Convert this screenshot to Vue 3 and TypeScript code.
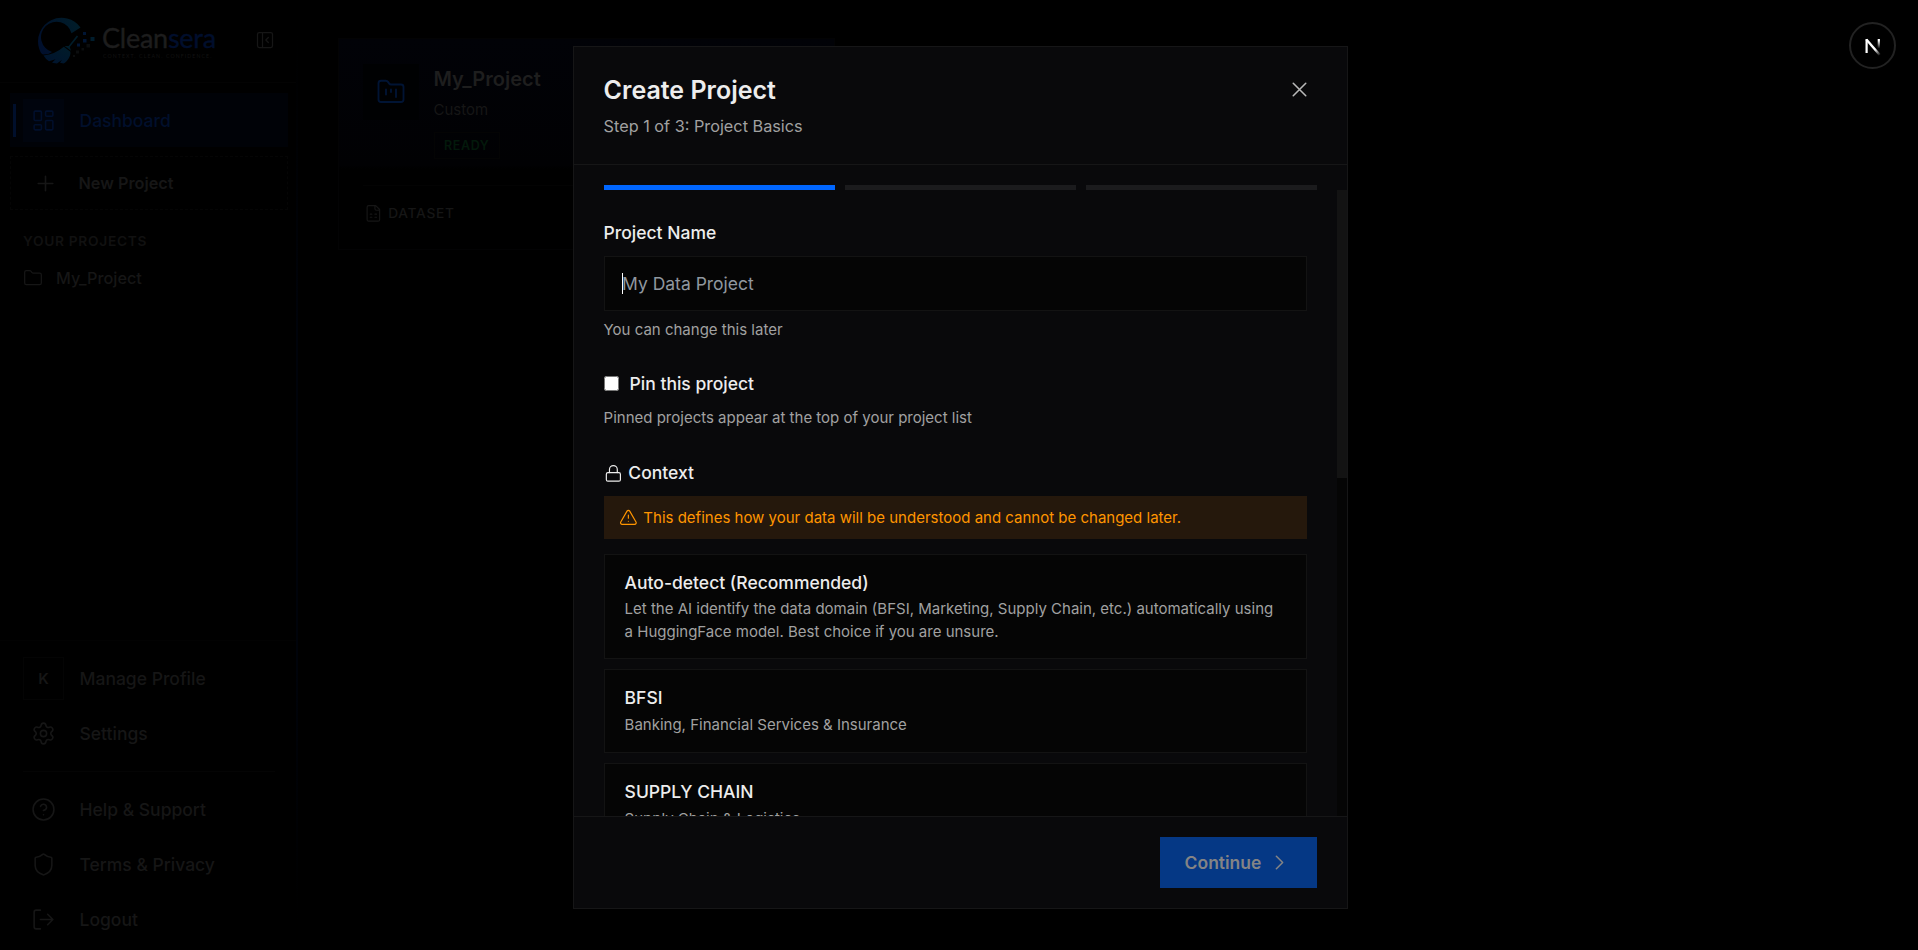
<script setup lang="ts">
import { ref } from 'vue'

interface NavItem {
  label: string
  icon: string
}

interface ContextOption {
  title: string
  description: string
  tall?: boolean
}

const iconPaths: Record<string, string> = {
  settings:
    'M9.671 4.136a2.34 2.34 0 0 1 4.659 0 2.34 2.34 0 0 0 3.319 1.915 2.34 2.34 0 0 1 2.33 4.033 2.34 2.34 0 0 0 0 3.831 2.34 2.34 0 0 1-2.33 4.033 2.34 2.34 0 0 0-3.319 1.915 2.34 2.34 0 0 1-4.659 0 2.34 2.34 0 0 0-3.32-1.915 2.34 2.34 0 0 1-2.33-4.033 2.34 2.34 0 0 0 0-3.831A2.34 2.34 0 0 1 6.35 6.051a2.34 2.34 0 0 0 3.319-1.915 M15 12a3 3 0 1 1-6 0 3 3 0 0 1 6 0',
  help: 'M22 12a10 10 0 1 1-20 0 10 10 0 0 1 20 0 M9.09 9a3 3 0 0 1 5.83 1c0 2-3 3-3 3 M12 17h.01',
  shield:
    'M20 13c0 5-3.5 7.5-7.66 8.95a1 1 0 0 1-.67-.01C7.5 20.5 4 18 4 13V6a1 1 0 0 1 1-1c2 0 4.5-1.2 6.24-2.72a1.17 1.17 0 0 1 1.52 0C14.51 3.81 17 5 19 5a1 1 0 0 1 1 1z',
  logout: 'M9 21H5a2 2 0 0 1-2-2V5a2 2 0 0 1 2-2h4 M16 17l5-5-5-5 M21 12H9',
}

const supportItems: NavItem[] = [
  { label: 'Help & Support', icon: 'help' },
  { label: 'Terms & Privacy', icon: 'shield' },
  { label: 'Logout', icon: 'logout' },
]

const options: ContextOption[] = [
  {
    title: 'Auto-detect (Recommended)',
    description:
      'Let the AI identify the data domain (BFSI, Marketing, Supply Chain, etc.) automatically using a HuggingFace model. Best choice if you are unsure.',
    tall: true,
  },
  { title: 'BFSI', description: 'Banking, Financial Services & Insurance' },
  { title: 'SUPPLY CHAIN', description: 'Supply Chain & Logistics' },
]

const steps = 3
const currentStep = ref(1)
const projectName = ref('')
const pinned = ref(false)
</script>

<template>
  <div class="page">
    <aside class="sidebar">
      <header class="brand">
        <svg class="brand-mark" width="58" height="50" viewBox="0 0 58 50">
          <defs>
            <linearGradient id="arc" x1="0" y1="0.6" x2="1" y2="0.2">
              <stop offset="0" stop-color="#000f2c" />
              <stop offset="1" stop-color="#001d29" />
            </linearGradient>
            <linearGradient id="brush" x1="0" y1="1" x2="1" y2="0">
              <stop offset="0" stop-color="#00122e" />
              <stop offset="1" stop-color="#001c29" />
            </linearGradient>
          </defs>
          <path
            d="M43.5 12.5A23.5 23.5 0 0 0 2 33Q3.500 38.500 6 39.500 12 39.500 15 37A15.5 15.5 0 1 1 34.5 18.2Z"
            fill="url(#arc)"
          />
          <path d="M39.8 20.5l1.4 1-8.4 10.6 1.2 3.6-6.4-4.6 4-.2z" fill="#001c29" />
          <path
            d="M26.8 31.8l6.6 4.9C34 41 30.500 46.500 26.500 48.500L23 47.800l2-3-5 3.700-5-.8 3.500-3.500-6.500 2Q8.500 44 6.500 40.500 18 39.500 26.800 31.800z"
            fill="url(#brush)"
          />
          <g fill="#001534">
            <rect x="46" y="17" width="3" height="3" />
            <rect x="53.500" y="22" width="4" height="4" fill="#001d2d" />
            <rect x="46" y="24" width="3.500" height="3.500" />
            <rect x="40" y="28.500" width="3" height="3" />
          </g>
          <g fill="#0b0d0e">
            <rect x="49.500" y="29" width="3.500" height="3.500" />
            <rect x="44.500" y="33" width="2.500" height="2.500" />
            <rect x="39" y="35.500" width="3" height="3" />
            <rect x="36" y="40" width="2" height="2" />
          </g>
        </svg>
        <div class="brand-text">
          <div class="brand-name">Clean<span>sera</span></div>
          <div class="brand-tag">CONTEXT. CLEAN. CONFIDENCE.</div>
        </div>
        <svg class="icon collapse" width="20" height="20" viewBox="0 0 24 24">
          <rect x="3" y="3" width="18" height="18" rx="2" />
          <path d="M9 3v18M16 15l-3-3 3-3" />
        </svg>
      </header>

      <nav class="nav">
        <a class="nav-item active">
          <span class="marker"></span>
          <span class="nav-icon">
            <svg class="icon" width="25" height="25" viewBox="0 0 24 24">
              <rect x="3" y="3" width="7" height="9" rx="1" />
              <rect x="14" y="3" width="7" height="5" rx="1" />
              <rect x="14" y="12" width="7" height="9" rx="1" />
              <rect x="3" y="16" width="7" height="5" rx="1" />
            </svg>
          </span>
          Dashboard
        </a>
        <a class="new-project">
          <svg class="icon" width="25" height="25" viewBox="0 0 24 24"><path d="M5 12h14M12 5v14" /></svg>
          New Project
        </a>
        <div class="section-title">YOUR PROJECTS</div>
        <a class="project">
          <svg class="icon" width="20" height="20" viewBox="0 0 24 24">
            <path
              d="M20 20a2 2 0 0 0 2-2V8a2 2 0 0 0-2-2h-7.900a2 2 0 0 1-1.690-.9L9.600 3.900A2 2 0 0 0 7.930 3H4a2 2 0 0 0-2 2v13a2 2 0 0 0 2 2Z"
            />
          </svg>
          My_Project
        </a>
      </nav>

      <div class="sidebar-foot">
        <a class="nav-item"><span class="nav-icon avatar">K</span>Manage Profile</a>
        <a class="nav-item">
          <span class="nav-icon">
            <svg class="icon" width="25" height="25" viewBox="0 0 24 24"><path :d="iconPaths.settings" /></svg>
          </span>
          Settings
        </a>
        <div class="rule"></div>
        <a v-for="item in supportItems" :key="item.label" class="nav-item">
          <span class="nav-icon">
            <svg class="icon" width="25" height="25" viewBox="0 0 24 24"><path :d="iconPaths[item.icon]" /></svg>
          </span>
          {{ item.label }}
        </a>
      </div>
    </aside>

    <main class="main">
      <article class="project-card">
        <div class="card-top">
          <div class="card-icon">
            <svg class="icon" width="30" height="30" viewBox="0 0 24 24">
              <path
                d="M4 20h16a2 2 0 0 0 2-2V8a2 2 0 0 0-2-2h-7.930a2 2 0 0 1-1.660-.9l-.820-1.200A2 2 0 0 0 7.930 3H4a2 2 0 0 0-2 2v13c0 1.100.9 2 2 2ZM8 10v4M12 10v2M16 10v6"
              />
            </svg>
          </div>
          <div class="card-info">
            <h3>My_Project</h3>
            <p>Custom</p>
            <span class="badge">READY</span>
          </div>
        </div>
        <div class="card-meta">
          <svg class="icon" width="18.750" height="18.750" viewBox="0 0 24 24">
            <path
              d="M15 2H6a2 2 0 0 0-2 2v16a2 2 0 0 0 2 2h12a2 2 0 0 0 2-2V7ZM14 2v4a2 2 0 0 0 2 2h4M8 13h2M14 13h2M8 17h2M14 17h2"
            />
          </svg>
          DATASET
        </div>
      </article>
    </main>

    <section class="modal">
      <header class="modal-head">
        <div>
          <h2>Create Project</h2>
          <p>Step {{ currentStep }} of {{ steps }}: Project Basics</p>
        </div>
        <button class="close" type="button">
          <svg class="icon" width="25" height="25" viewBox="0 0 24 24"><path d="M18 6 6 18M6 6l12 12" /></svg>
        </button>
      </header>

      <div class="progress">
        <span v-for="n in steps" :key="n" :class="{ done: n <= currentStep }"></span>
      </div>

      <div class="scroll-row">
        <div class="form">
          <label class="label">Project Name</label>
          <div class="field">
            <input v-model="projectName" type="text" placeholder="My Data Project" />
            <i class="caret"></i>
          </div>
          <p class="hint">You can change this later</p>

          <label class="label pin">
            <input v-model="pinned" type="checkbox" />
            Pin this project
          </label>
          <p class="hint pin-hint">Pinned projects appear at the top of your project list</p>

          <div class="label context">
            <svg class="icon" width="18.750" height="18.750" viewBox="0 0 24 24">
              <rect x="3" y="11" width="18" height="11" rx="2" />
              <path d="M7 11V7a5 5 0 0 1 10 0v4" />
            </svg>
            Context
          </div>
          <div class="warning">
            <svg class="icon" width="18.750" height="18.750" viewBox="0 0 24 24">
              <path d="m21.730 18-8-14a2 2 0 0 0-3.480 0l-8 14A2 2 0 0 0 4 21h16a2 2 0 0 0 1.730-3M12 9v4M12 17h.01" />
            </svg>
            This defines how your data will be understood and cannot be changed later.
          </div>

          <div class="options">
            <div v-for="o in options" :key="o.title" class="option" :class="{ tall: o.tall }">
              <h4>{{ o.title }}</h4>
              <p>{{ o.description }}</p>
            </div>
          </div>
        </div>
        <div class="track"><div class="thumb"></div></div>
      </div>

      <footer class="modal-foot">
        <button class="continue" type="button">
          Continue
          <svg class="icon" width="25" height="25" viewBox="0 0 24 24"><path d="m9 18 6-6-6-6" /></svg>
        </button>
      </footer>
    </section>

    <div class="dev-badge">
      <svg width="18" height="20" viewBox="0 0 18 20">
        <defs>
          <linearGradient id="stem" x1="0" y1="0" x2="0" y2="1">
            <stop offset="0.150" stop-color="#fff" />
            <stop offset="1" stop-color="#fff" stop-opacity="0" />
          </linearGradient>
          <linearGradient id="slash" gradientUnits="userSpaceOnUse" x1="8" y1="9" x2="16.500" y2="19">
            <stop offset="0.400" stop-color="#fff" />
            <stop offset="1" stop-color="#fff" stop-opacity="0" />
          </linearGradient>
        </defs>
        <rect x="1.500" y="3" width="2.200" height="14" fill="#fff" />
        <rect x="13.700" y="3" width="2.200" height="9.500" fill="url(#stem)" />
        <line x1="2.400" y1="3.500" x2="15.800" y2="19" stroke="url(#slash)" stroke-width="2.400" />
      </svg>
    </div>
  </div>
</template>

<style>
html,
body {
  margin: 0;
  background: #000;
  overflow: hidden;
}
</style>

<style scoped>
.page {
  position: relative;
  display: flex;
  width: 1918px;
  height: 950px;
  overflow: hidden;
  background: #000;
  color: #161616;
  font-family: Inter, 'Liberation Sans', sans-serif;
}
.page * {
  box-sizing: border-box;
}
h2,
h3,
h4,
p {
  margin: 0;
}
button {
  border: 0;
  padding: 0;
  background: none;
  font-family: inherit;
}
.icon {
  flex: none;
  display: block;
  fill: none;
  stroke: currentColor;
  stroke-width: 1.5;
  stroke-linecap: round;
  stroke-linejoin: round;
}

.sidebar {
  display: flex;
  flex-direction: column;
  width: 298px;
  height: 950px;
  border-right: 2px solid;
  border-image: linear-gradient(#000 3%, #00030a 35%, #00030a 70%, #000 97%) 1;
}
.brand {
  display: flex;
  align-items: flex-start;
  height: 83px;
  padding: 15px 0 0 37px;
  border-bottom: 1px solid #030303;
}
.brand-text {
  width: 132px;
  padding: 7px 0 0 7px;
  white-space: nowrap;
}
.brand-name {
  height: 31px;
  font: 400 27px/31px Lato, sans-serif;
  letter-spacing: -0.25px;
  color: #1d1d1d;
  -webkit-text-stroke: 0.4px currentColor;
}
.brand-name span {
  color: #000e2c;
}
.brand-tag {
  padding-left: 1px;
  font: 400 5.2px/6px Lato, sans-serif;
  letter-spacing: 1.1px;
  color: #121212;
}
.collapse {
  margin: 15px 0 0 28px;
}
.nav {
  display: flex;
  flex-direction: column;
  padding: 10px 8px 0 10px;
}
.nav-item {
  position: relative;
  display: flex;
  align-items: center;
  gap: 15.5px;
  height: 55px;
  padding-left: 13px;
  font-size: 17.5px;
  font-weight: 500;
}
.nav-icon {
  display: flex;
  align-items: center;
  justify-content: center;
  width: 41px;
  height: 43px;
}
.active {
  height: 54px;
  background: #000207;
  color: #000f2c;
}
.active .nav-icon {
  background: #00040d;
}
.marker {
  position: absolute;
  left: 3px;
  top: 11px;
  width: 3px;
  height: 33px;
  background: #000f2c;
}
.avatar {
  border: 1px solid #040404;
  font-size: 15px;
  font-weight: 600;
}
.new-project {
  display: flex;
  align-items: center;
  gap: 20.5px;
  height: 54px;
  margin-top: 9px;
  padding-left: 22px;
  border: 1px dashed #050505;
  font-size: 16.25px;
  font-weight: 600;
}
.section-title {
  margin-top: 21px;
  padding-left: 13px;
  font-size: 13.75px;
  line-height: 20px;
  font-weight: 600;
  letter-spacing: 0.05em;
  color: #111;
}
.project {
  display: flex;
  align-items: center;
  gap: 13.5px;
  height: 40px;
  margin-top: 7px;
  padding-left: 12.5px;
  font-size: 16.25px;
  font-weight: 500;
}
.sidebar-foot {
  margin-top: auto;
  padding: 10px 0 3px 10px;
  border-top: 1px solid #020202;
}
.rule {
  height: 1px;
  margin: 10px 21px 10px 13px;
  background: #040404;
}

.main {
  padding: 38px 0 0 40px;
}
.project-card {
  width: 497px;
  height: 212px;
  border: 1px solid #030304;
  background: linear-gradient(#010207 0, #010103 60%, #000 62%);
}
.card-top {
  display: flex;
  gap: 14.5px;
  height: 147px;
  margin-left: 24px;
  padding-top: 25px;
  border-bottom: 1px solid #030303;
}
.card-icon {
  display: flex;
  align-items: center;
  justify-content: center;
  width: 56px;
  height: 56px;
  background: #000102;
  color: #001434;
}
.card-info h3 {
  font-size: 20px;
  line-height: 30px;
  font-weight: 600;
  color: #1e1e1e;
}
.card-info p {
  margin-top: 4px;
  font-size: 15px;
  line-height: 24px;
}
.badge {
  display: block;
  width: 66px;
  height: 27px;
  margin-top: 10px;
  padding-left: 9.5px;
  border: 1px solid #040404;
  font-size: 12.5px;
  line-height: 25px;
  font-weight: 600;
  letter-spacing: 0.05em;
  color: #03190b;
}
.card-meta {
  display: flex;
  align-items: center;
  gap: 6px;
  padding: 18px 0 0 24.5px;
  font-size: 13.75px;
  font-weight: 500;
  letter-spacing: 0.05em;
}

.modal {
  position: absolute;
  left: 572.6px;
  top: 46px;
  display: flex;
  flex-direction: column;
  width: 775px;
  height: 863px;
  border: 1px solid #161617;
  background: #09090b;
  color: #ededed;
}
.modal-head {
  display: flex;
  justify-content: space-between;
  height: 118px;
  padding: 28px 35px 0 30px;
  border-bottom: 1px solid #161617;
}
.modal-head h2 {
  font-size: 25px;
  line-height: 30px;
  font-weight: 600;
}
.modal-head p {
  margin-top: 9px;
  font-size: 16.25px;
  line-height: 24px;
  color: #a1a1a1;
}
.close {
  height: 25px;
  margin-top: 2px;
  color: #b8b8b8;
}
.progress {
  display: grid;
  grid-template-columns: repeat(3, 1fr);
  gap: 10px;
  padding: 20px 30px 0;
}
.progress span {
  height: 5px;
  background: #1b1b1d;
}
.progress .done {
  background: #0066ff;
}
.scroll-row {
  display: flex;
  flex: 1;
  min-height: 0;
  overflow: hidden;
}
.form {
  flex: 1;
  padding: 30px 30px 0;
}
.label {
  display: block;
  font-size: 17.5px;
  line-height: 26px;
  font-weight: 500;
}
.field {
  position: relative;
  margin-top: 10px;
}
.field input {
  display: block;
  width: 100%;
  height: 55px;
  padding: 0 17.4px;
  border: 1px solid #131313;
  border-radius: 0;
  outline: 0;
  background: #050505;
  color: #ededed;
  font: 400 17.5px Inter, sans-serif;
}
.field input::placeholder {
  color: #90979f;
}
.caret {
  position: absolute;
  left: 18px;
  top: 17px;
  width: 1px;
  height: 21px;
  background: #fff;
}
.hint {
  margin-top: 7px;
  font-size: 15px;
  line-height: 23px;
  color: #a1a1a1;
}
.pin {
  display: flex;
  align-items: center;
  gap: 11px;
  margin-top: 30px;
}
.pin input {
  width: 15px;
  height: 15px;
  margin: 0 0 1px;
}
.pin-hint {
  margin-top: 9px;
}
.context {
  display: flex;
  align-items: center;
  gap: 6px;
  margin-top: 31px;
}
.warning {
  display: flex;
  align-items: center;
  gap: 6px;
  height: 43px;
  margin-top: 10px;
  padding-left: 15px;
  background: #25180c;
  color: #ff9500;
  font-size: 15px;
}
.options {
  display: flex;
  flex-direction: column;
  gap: 10px;
  margin-top: 15px;
}
.option {
  height: 84px;
  padding: 15px 20px;
  border: 1px solid #131313;
  background: #050505;
}
.option.tall {
  height: 105px;
}
.option h4 {
  font-size: 17.5px;
  line-height: 26px;
  font-weight: 500;
}
.option p {
  margin-top: 2px;
  font-size: 15px;
  line-height: 23px;
  color: #a1a1a1;
}
.option.tall p {
  margin-top: 1px;
}
.track {
  width: 10px;
  background: #050505;
}
.thumb {
  height: 288px;
  background: #131313;
}
.modal-foot {
  display: flex;
  justify-content: flex-end;
  height: 92px;
  padding: 20px 30px 0;
  border-top: 1px solid #161617;
}
.continue {
  display: flex;
  align-items: center;
  justify-content: space-between;
  width: 157px;
  height: 51px;
  padding: 0 25px;
  background: #053885;
  color: #848485;
  font-size: 17.5px;
  font-weight: 600;
}
.dev-badge {
  position: absolute;
  left: 1849px;
  top: 22px;
  display: flex;
  align-items: center;
  justify-content: center;
  width: 47px;
  height: 47px;
  border: 2px solid #222;
  border-radius: 50%;
  background: #000;
}
</style>
